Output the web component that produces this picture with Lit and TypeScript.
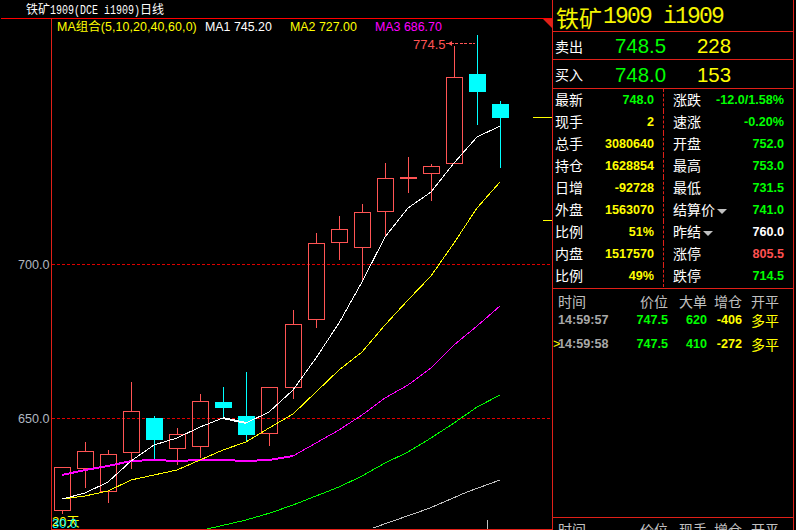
import { LitElement, html, css, svg } from "lit";
import { customElement } from "lit/decorators.js";

type Candle = [number, number, number, number, number, boolean];
// left, high, box top, box bottom, low, falling
const candles: Candle[] = [
  [54, 467, 467, 510, 514, false],
  [77, 442, 451, 468, 488, false],
  [100, 450, 454, 491, 503, false],
  [123, 382, 411, 452, 469, false],
  [146, 416, 418, 440, 460, true],
  [169, 428, 434, 448, 465, false],
  [192, 394, 401, 446, 458, false],
  [215, 387, 402, 408, 418, true],
  [238, 372, 416, 435, 442, true],
  [261, 387, 387, 433, 446, false],
  [285, 310, 324, 387, 399, false],
  [308, 233, 243, 319, 328, false],
  [331, 216, 229, 242, 260, false],
  [354, 204, 212, 247, 282, false],
  [377, 163, 178, 211, 237, false],
  [400, 157, 177, 178, 193, false],
  [423, 164, 166, 173, 201, false],
  [446, 46, 77, 163, 163, false],
  [469, 35, 74, 92, 125, true],
  [492, 101, 104, 118, 168, true],
];

const ma1 = "62,499 85,493 108,482 131,461 154,445 177,438 200,427 223,418 246,423 269,412 293,390 316,358 339,323 362,282 385,237 408,208 431,192 454,163 477,137 500,126";
const ma2 = "62,499 85,496 108,491 131,480 154,475 177,470 200,460 223,450 246,442 269,428 293,414 316,392 339,370 362,352 385,325 408,300 431,276 454,243 477,208 500,182";
const ma3 = "62,475 85,470 108,466 131,461 154,460 177,461 200,460 223,460 246,461 269,460 293,456 316,443 339,430 362,415 385,398 408,385 431,368 454,345 477,326 500,306";
const ma4 = "207,529 246,520 270,513 293,505 316,496 339,487 362,476 385,463 408,452 431,438 454,423 477,407 500,395";
const ma5 = "373,528 430,508 467,492 500,480";

const quotes: [string, string, string, string, string, string][] = [
  ["最新", "748.0", "g", "涨跌", "-12.0/1.58%", "g"],
  ["现手", "2", "y", "速涨", "-0.20%", "g"],
  ["总手", "3080640", "y", "开盘", "752.0", "g"],
  ["持仓", "1628854", "y", "最高", "753.0", "g"],
  ["日增", "-92728", "y", "最低", "731.5", "g"],
  ["外盘", "1563070", "y", "结算价▾", "741.0", "g"],
  ["比例", "51%", "y", "昨结▾", "760.0", "w"],
  ["内盘", "1517570", "y", "涨停", "805.5", "r"],
  ["比例", "49%", "y", "跌停", "714.5", "g"],
];

@customElement("app-root")
export class AppRoot extends LitElement {
  static styles = css`
    :host {
      display: block;
      width: 796px;
      height: 530px;
      overflow: hidden;
      background: #000;
    }
    .page {
      display: flex;
      width: 796px;
      height: 530px;
      background: #000;
      overflow: hidden;
    }
    .chart {
      display: block;
      flex: 0 0 552px;
      width: 552px;
      height: 530px;
    }
    .chart text {
      font-family: "Liberation Sans", "Noto Sans CJK SC", sans-serif;
      font-size: 12.4px;
    }
    .chart .title {
      font-family: "Liberation Mono", "Noto Sans CJK SC", monospace;
      font-size: 12px;
    }
    .chart .title-cjk {
      font-family: "Noto Sans CJK SC", sans-serif;
      font-size: 12px;
    }
    .chart .ma0 {
      letter-spacing: 0.1px;
    }
    .chart .axis {
      font-size: 12.6px;
    }
    .chart .mid {
      font-size: 13px;
    }
    .panel {
      flex: 0 0 242px;
      width: 242px;
      height: 530px;
      box-sizing: border-box;
      border-left: 1px solid #e02018;
      border-right: 1px solid #e02018;
      font-family: "Liberation Sans", "Noto Sans CJK SC", sans-serif;
      display: flex;
      flex-direction: column;
      overflow: hidden;
    }
    .head {
      height: 32px;
      flex: none;
      box-sizing: border-box;
      border-bottom: 1px solid #e02018;
      color: #f4f400;
      display: flex;
      align-items: center;
      padding: 3px 0 0 3px;
      font-family: "Liberation Mono", "Noto Sans CJK SC", monospace;
      font-size: 23px;
      letter-spacing: -1.8px;
      white-space: pre;
    }
    .head b {
      font-family: "Noto Sans CJK SC", sans-serif;
      font-weight: 400;
      font-size: 23px;
      letter-spacing: 0;
      margin-right: 1px;
    }
    .book {
      flex: none;
      box-sizing: border-box;
      border-bottom: 1px solid #e02018;
      display: grid;
      grid-template-columns: 111px 65px;
      align-items: center;
      padding-left: 2px;
      font-size: 20.4px;
      position: relative;
    }
    .book.sell { height: 28px; }
    .book.buy { height: 29px; }
    .book .lab {
      position: absolute;
      left: 2px;
      top: 50%;
      transform: translateY(-50%);
      font-family: "Noto Sans CJK SC", sans-serif;
      font-size: 14px;
      font-style: normal;
      color: #fff;
    }
    .book span {
      text-align: right;
      padding-top: 2px;
    }
    .g { color: #00ff00; }
    .y { color: #ffff00; }
    .w { color: #ffffff; }
    .r { color: #ff5050; }
    .quotes {
      flex: none;
      height: 200px;
      box-sizing: border-box;
      border-bottom: 1px solid #e02018;
      display: grid;
      grid-template-columns: 111px 1fr;
      grid-template-rows: repeat(9, 22px);
    }
    .q {
      display: flex;
      justify-content: space-between;
      align-items: center;
      font-size: 12.6px;
      font-weight: 700;
      white-space: nowrap;
    }
    .q.left {
      padding: 0 9px 0 2px;
      border-right: 1px dashed #e02018;
    }
    .q.right { padding: 0 9px 0 9px; }
    .q em {
      font-style: normal;
      font-weight: 400;
      font-size: 14px;
      font-family: "Noto Sans CJK SC", sans-serif;
      color: #fff;
      margin-bottom: 2px;
    }
    .tri {
      display: inline-block;
      width: 0;
      height: 0;
      margin-left: 2px;
      vertical-align: middle;
      border-left: 5px solid transparent;
      border-right: 5px solid transparent;
      border-top: 5px solid #c0c0c0;
    }
    .ticks {
      flex: none;
      height: 229px;
      box-sizing: border-box;
      border-bottom: 1px solid #e02018;
    }
    .tr {
      display: grid;
      flex: none;
      grid-template-columns: 54px 61px 39px 35px 1fr;
      align-items: center;
      font-size: 12.6px;
      font-weight: 700;
      white-space: nowrap;
    }
    .tr.hd {
      height: 24px;
      font-family: "Noto Sans CJK SC", sans-serif;
      font-size: 14px;
      font-weight: 400;
      color: #c0c0c0;
    }
    .tr.hd.last { height: 22px; }
    .tr.row { height: 24px; }
    .tr.row.first { margin-top: -5px; }
    .tr > :nth-child(2),
    .tr > :nth-child(3),
    .tr > :nth-child(4) { text-align: right; }
    .tr > :nth-child(1) { padding-left: 5px; }
    .tr > :nth-child(5) {
      padding-left: 9px;
      font-family: "Noto Sans CJK SC", sans-serif;
      font-size: 14px;
      font-weight: 400;
    }
    .time { color: #a8a8a8; position: relative; }
    .mark {
      position: absolute;
      left: 0;
      top: 0;
      color: #ffff00;
      font-weight: 400;
      font-style: normal;
    }
  `;

  private candle(c: Candle) {
    const [x, hi, top, bot, lo, fall] = c;
    const cx = x + 8.5;
    const col = fall ? "#00ffff" : "#ff5454";
    const wick = svg`<path d="M${cx} ${hi}V${top}M${cx} ${bot}V${lo}" stroke=${col} stroke-width="1" fill="none" />`;
    return fall
      ? svg`${wick}<rect x=${x} y=${top} width="17" height=${bot - top} fill=${col} />`
      : svg`${wick}<rect x=${x + 0.5} y=${top + 0.5} width="16" height=${bot - top} fill="none" stroke=${col} />`;
  }

  // Nearly flat stretches of the averages are heavier in the reference.
  private maLine(pts: string, col: string, heavy: boolean) {
    const p = pts.split(" ").map((s) => s.split(",").map(Number));
    return p.slice(1).map((b, i) => {
      const a = p[i];
      const slope = Math.abs((b[1] - a[1]) / (b[0] - a[0]));
      const w = heavy && slope <= 0.25 ? 2 : 1;
      return svg`<line x1=${a[0]} y1=${a[1]} x2=${b[0]} y2=${b[1]} stroke=${col} stroke-width=${w} shape-rendering="crispEdges" />`;
    });
  }

  private chart() {
    return html`<svg class="chart" viewBox="0 0 552 530" width="552" height="530">
      <g shape-rendering="crispEdges">
        <path d="M1 18.5H552" stroke="#ff0000" />
        <path d="M51.5 18V530" stroke="#e02018" />
        <path d="M51 529.5H552" stroke="#e02018" />
        <path d="M52 264.5H552M52 418.5H552" stroke="#e00000" stroke-dasharray="3 2" />
        <path d="M533 117.5H552M543 220.5H552" stroke="#ffff00" />
        <path d="M487.5 520V529" stroke="#c0c0c0" />
        ${candles.map((c) => this.candle(c))}
        <path d="M400 178H417" stroke="#ff5454" stroke-width="2" />
        <path d="M446 43.5H475" stroke="#ff5454" stroke-dasharray="3 1.5" />
      </g>
      <polygon points="543,19 552,19 552,28" fill="#e02018" />
      <polygon points="448,43.5 452,41 452,46" fill="#ff5454" />
      ${this.maLine(ma5, "#c0c0c0", false)}
      ${this.maLine(ma4, "#00ff00", false)}
      ${this.maLine(ma3, "#ff00ff", true)}
      ${this.maLine(ma2, "#ffff00", false)}
      ${this.maLine(ma1, "#ffffff", true)}
      <text class="title-cjk" x="26" y="14" fill="#fff">铁矿</text>
      <text class="title" x="50" y="14" fill="#fff" textLength="90" lengthAdjust="spacingAndGlyphs">1909(DCE i1909)</text>
      <text class="title-cjk" x="140" y="14" fill="#fff">日线</text>
      <text class="ma0" x="57" y="31" fill="#ffff00">MA组合(5,10,20,40,60,0)</text>
      <text x="205" y="31" fill="#fff">MA1 745.20</text>
      <text x="290" y="31" fill="#ffff00">MA2 727.00</text>
      <text x="375" y="31" fill="#ff00ff">MA3 686.70</text>
      <text class="mid" x="413" y="49" fill="#ff5454">774.5</text>
      <text class="axis" x="18" y="269" fill="#b0b8c0">700.0</text>
      <text class="axis" x="18" y="423" fill="#b0b8c0">650.0</text>
      <text class="mid" x="52" y="526" fill="#ffff00">20天</text>
      <text class="mid" x="52" y="528" fill="#00ffff">30.0</text>
    </svg>`;
  }

  private label(s: string) {
    if (s.endsWith("▾")) {
      return html`<em>${s.slice(0, -1)}<i class="tri"></i></em>`;
    }
    return html`<em>${s}</em>`;
  }

  render() {
    return html`<div class="page">
      ${this.chart()}
      <div class="panel">
        <div class="head"><b>铁矿</b>1909 i1909</div>
        <div class="book sell">
          <i class="lab">卖出</i>
          <span class="g">748.5</span><span class="y">228</span>
        </div>
        <div class="book buy">
          <i class="lab">买入</i>
          <span class="g">748.0</span><span class="y">153</span>
        </div>
        <div class="quotes">
          ${quotes.map(
            (q) => html`
              <div class="q left">${this.label(q[0])}<span class=${q[2]}>${q[1]}</span></div>
              <div class="q right">${this.label(q[3])}<span class=${q[5]}>${q[4]}</span></div>
            `
          )}
        </div>
        <div class="ticks">
          <div class="tr hd"><span>时间</span><span>价位</span><span>大单</span><span>增仓</span><span>开平</span></div>
          <div class="tr row first">
            <span class="time">14:59:57</span><span class="g">747.5</span><span class="g">620</span><span class="y">-406</span><span class="y">多平</span>
          </div>
          <div class="tr row">
            <span class="time"><i class="mark">&gt;</i>14:59:58</span><span class="g">747.5</span><span class="g">410</span><span class="y">-272</span><span class="y">多平</span>
          </div>
        </div>
        <div class="tr hd last"><span>时间</span><span>价位</span><span>现手</span><span>增仓</span><span>开平</span></div>
      </div>
    </div>`;
  }
}
